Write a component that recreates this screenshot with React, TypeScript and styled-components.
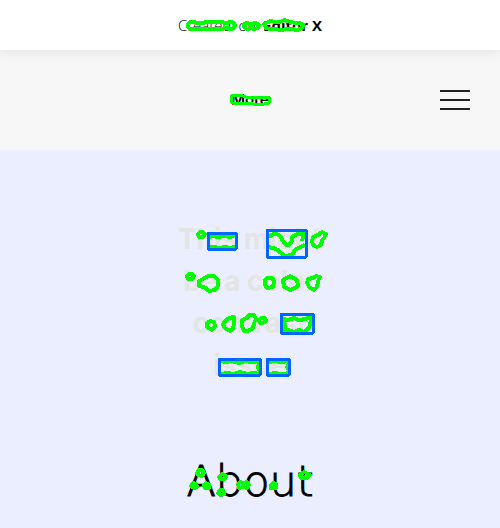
import React from 'react';
import styled, { createGlobalStyle } from 'styled-components';

const GlobalStyle = createGlobalStyle`
  * { box-sizing: border-box; }
  body { margin: 0; background: #ebeeff; font-family: "Open Sans", sans-serif; color: #000; }
`;
const Banner = styled.a`
  position: relative;
  z-index: 1;
  display: flex;
  align-items: center;
  justify-content: center;
  height: 50px;
  gap: 7px;
  background: #fff;
  color: #000;
  text-decoration: none;
  font-size: 15px;
  line-height: 20px;
  font-weight: 300;
  box-shadow: 0 1px 12px rgba(0, 0, 0, 0.1);
`;
const Brand = styled.strong`
  font-weight: 700;
`;
const Header = styled.header`
  position: relative;
  display: grid;
  grid-template-columns: 1fr auto 1fr;
  align-items: center;
  height: 100px;
  padding: 0 30px;
  background: #f7f7f7;
`;
const More = styled.a`
  grid-column: 2;
  color: #000;
  text-decoration: none;
  font: 600 15px/20px "Inter", sans-serif;
`;
const MenuButton = styled.button`
  justify-self: end;
  display: flex;
  padding: 0;
  border: 0;
  background: none;
`;
const Hero = styled.main`
  position: relative;
  display: flex;
  flex-direction: column;
  align-items: center;
  padding: 68px 30px 0;
  min-height: 378px;
  text-align: center;
`;
const Notice = styled.p`
  margin: 0;
  width: 160px;
  color: #e4e4e4;
  font: 700 28px/42px "Inter", sans-serif;
`;
const Title = styled.h1`
  margin: 65px 0 0;
  font: 200 43px/60px "DejaVu Sans", "DejaVu Sans Light", sans-serif;
  -webkit-text-stroke: 1px #000;
`;
const Marks = styled.svg<{ $weight: number }>`
  position: absolute;
  top: 0;
  left: 50%;
  transform: translateX(-50%);
  fill: none;
  stroke: #00ff00;
  stroke-width: ${({ $weight }) => $weight};
  stroke-linejoin: round;
  shape-rendering: crispEdges;
  pointer-events: none;
`;
const Frame = styled.rect`
  stroke: #0066ff;
  stroke-width: 3;
`;

type Box = [number, number, number, number];
type OutlinesProps = { origin: number; height: number; paths: string[]; boxes?: Box[]; weight?: number };

function Outlines({ origin, height, paths, boxes = [], weight = 4 }: OutlinesProps) {
  return (
    <Marks $weight={weight} width="500" height={height} viewBox={`0 ${origin} 500 ${height}`} aria-hidden="true">
      {paths.map((d) => <path key={d} d={d} />)}
      {boxes.map(([x, y, w, h]) => (
        <Frame key={`${x}-${y}`} x={x} y={y} width={w} height={h} />
      ))}
    </Marks>
  );
}

const bannerPaths = [
  'M188 24L190 22L194 22L197 23L203 23L206 22L211 22L217 22L221 22L226 23L231 22L234 23L235 26L234 28L231 29L226 28L222 29L217 29L212 29L207 29L201 29L196 29L190 29L188 27Z',
  'M244 24L247 23L251 24L256 23L259 25L258 28L254 29L251 28L247 29L244 27Z',
  'M264 24L268 22L271 21L275 22L280 22L284 20L287 21L291 22L295 23L300 23L303 25L302 28L297 30L292 29L287 29L281 30L275 29L270 29L266 28Z',
];
const headerPaths = [
  'M231 97L233 95L236 96L239 95L243 96L246 97L250 97L255 97L260 97L265 97L269 97L270 100L269 103L264 104L258 104L253 104L248 103L244 104L239 103L235 104L231 102Z',
];
const heroPaths = [
  'M198 234L200 232L203 232L205 234L203 237L199 237Z',
  'M209 237L213 236L218 237L224 236L230 237L235 235M209 247L214 247L219 248L225 247L230 248L235 247',
  'M269 237L273 234L277 234L280 236L283 241L286 245L289 245L292 241L292 237L297 234L302 234L305 233L303 237L302 241M269 247L276 249L281 253L285 256L292 255L295 250L300 247L305 245',
  'M313 237L318 235L322 232L326 234L324 238L322 240L321 245L317 247L313 245L312 241Z',
  'M187 276L189 274L192 274L194 276L192 279L188 279Z',
  'M199 281L203 279L208 276L214 276L218 280L218 286L215 290L209 291L204 287L199 286Z',
  'M265 280L267 278L272 278L274 281L273 287L267 288L265 285Z',
  'M283 280L290 276L297 280L298 286L291 290L284 287Z',
  'M308 279L313 278L316 276L320 277L318 281L317 287L314 290L309 287L307 283Z',
  'M207 323L210 321L214 322L215 326L212 330L207 327Z',
  'M224 322L229 318L234 317L234 323L233 329L230 331L225 328L223 325Z',
  'M242 320L247 318L249 315L254 315L256 319L254 323L253 328L248 331L244 331L242 326Z',
  'M259 320L261 318L265 318L266 321L263 323L260 323Z',
  'M283 319L288 320L294 318L299 320L306 319L311 316L312 318L310 324L309 328L304 332L299 330L294 332L288 330L284 331L285 325Z',
  'M220 361L226 362L232 361L239 363L245 361L252 362L259 361M221 374L227 373L234 374L240 372L247 374L253 373L260 374M260 362L258 367L260 372',
  'M269 362L275 361L280 362L289 361M269 374L275 373L281 374L286 374L289 372M289 363L287 367L289 371',
  'M197 473L199 470L202 470L204 473L202 476L198 475Z',
  'M191 486L193 483L196 484L197 487L194 488Z',
  'M204 485L206 483L209 485L209 488L205 488Z',
  'M219 477L222 474L226 476L225 479L220 479Z',
  'M218 493L220 490L223 490L224 494L220 495Z',
  'M238 484L240 482L243 483L247 482L249 485L247 488L243 487L239 488Z',
  'M271 485L273 483L276 484L276 488L271 488Z',
  'M300 475L304 472L310 475L307 478L301 478Z',
];
const heroBoxes: Box[] = [
  [208, 233, 28, 16],
  [267, 230, 39, 27],
  [281, 314, 32, 19],
  [219, 359, 41, 16],
  [267, 359, 22, 16],
];

export default function App() {
  return (
    <>
      <GlobalStyle />
      <Banner href="#editor">
        <span>Created</span>
        <span>on</span>
        <Brand>Editor X</Brand>
        <Outlines origin={0} height={50} paths={bannerPaths} />
      </Banner>
      <Header>
        <More href="#more">More</More>
        <MenuButton aria-label="Open menu">
          <svg width="30" height="20" viewBox="0 0 30 20" stroke="#222" strokeWidth="2" aria-hidden="true">
            <path d="M0 1H30M0 10H30M0 19H30" />
          </svg>
        </MenuButton>
        <Outlines origin={50} height={100} paths={headerPaths} weight={3} />
      </Header>
      <Hero>
        <Notice>This might be a color contrast issue</Notice>
        <Title>About</Title>
        <Outlines origin={150} height={378} paths={heroPaths} boxes={heroBoxes} />
      </Hero>
    </>
  );
}
